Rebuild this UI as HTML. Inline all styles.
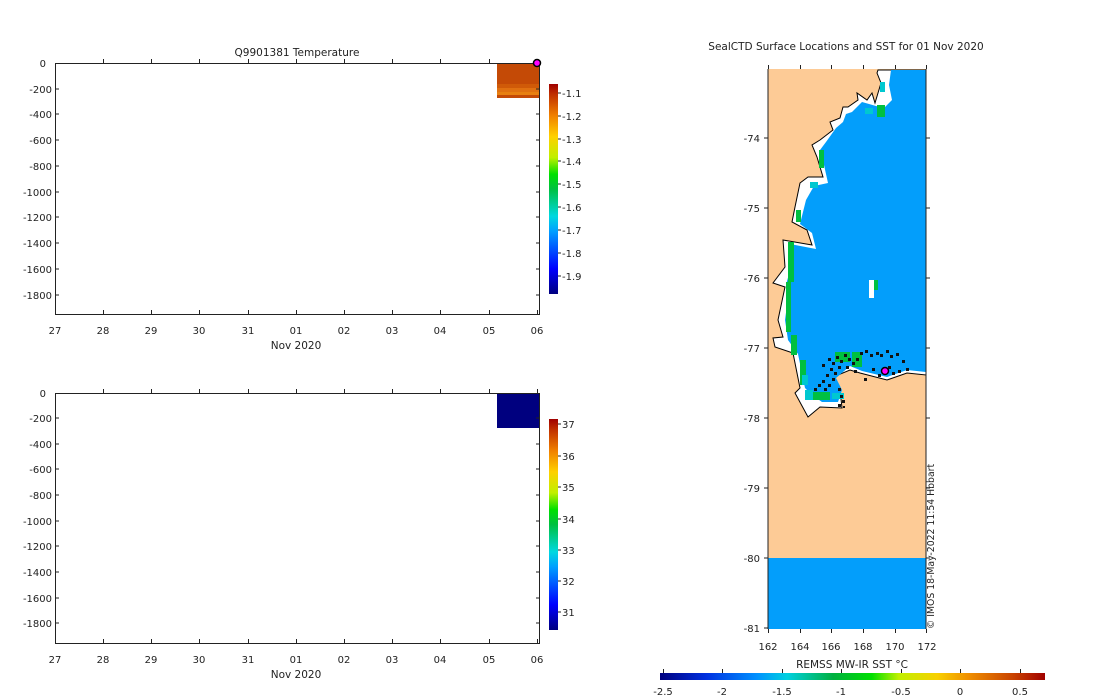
<!DOCTYPE html>
<html><head><meta charset="utf-8"><style>
html,body{margin:0;padding:0;background:#fff;}
svg{display:block;font-family:"DejaVu Sans","Liberation Sans",sans-serif;}
text{fill:#222;font-size:10px;}
</style></head><body>
<svg width="1100" height="700" viewBox="0 0 1100 700" xmlns="http://www.w3.org/2000/svg">
<defs>
<linearGradient id="jetv" x1="0" y1="1" x2="0" y2="0">
<stop offset="0" stop-color="#00007f"/><stop offset="0.12" stop-color="#0000ff"/><stop offset="0.3" stop-color="#00a0ff"/><stop offset="0.37" stop-color="#00d8e0"/><stop offset="0.5" stop-color="#00c040"/><stop offset="0.57" stop-color="#00e000"/><stop offset="0.65" stop-color="#c0f000"/><stop offset="0.75" stop-color="#ffd000"/><stop offset="0.85" stop-color="#f08000"/><stop offset="0.95" stop-color="#c03000"/><stop offset="1" stop-color="#a00000"/>
</linearGradient>
<linearGradient id="jeth" x1="0" y1="0" x2="1" y2="0">
<stop offset="0" stop-color="#00007f"/><stop offset="0.12" stop-color="#0030e0"/><stop offset="0.25" stop-color="#0090ff"/><stop offset="0.33" stop-color="#00d0e0"/><stop offset="0.45" stop-color="#00b040"/><stop offset="0.55" stop-color="#00e000"/><stop offset="0.62" stop-color="#c0f000"/><stop offset="0.72" stop-color="#f8d000"/><stop offset="0.8" stop-color="#f09000"/><stop offset="0.92" stop-color="#c84000"/><stop offset="1" stop-color="#a00000"/>
</linearGradient>
</defs>

<!-- TOP PLOT -->
<text x="297" y="56" text-anchor="middle" style="font-size:10.5px">Q9901381  Temperature</text>
<rect x="497" y="63" width="42" height="35" fill="#c44a06"/>
<rect x="497" y="84" width="42" height="4" fill="#d05a08"/>
<rect x="497" y="88" width="42" height="4" fill="#e07010"/>
<rect x="497" y="92" width="42" height="3" fill="#e88010"/>
<g stroke="#222" stroke-width="1" fill="none">
<path d="M55.5 63.5H539.5V314.5H55.5Z"/>
<path d="M55 89h4M55 114h4M55 140h4M55 166h4M55 192h4M55 217h4M55 243h4M55 269h4M55 295h4"/>
<path d="M536 89h3M536 114h3M536 140h3M536 166h3M536 192h3M536 217h3M536 243h3M536 269h3M536 295h3"/>
<path d="M103.5 63v-4M151.5 63v-4M199.5 63v-4M248.5 63v-4M296.5 63v-4M344.5 63v-4M392.5 63v-4M440.5 63v-4M489.5 63v-4M537.5 63v-4"/>
<path d="M103.5 314v-4M151.5 314v-4M199.5 314v-4M248.5 314v-4M296.5 314v-4M344.5 314v-4M392.5 314v-4M440.5 314v-4M489.5 314v-4M537.5 314v-4"/>
</g>
<circle cx="537" cy="63" r="3.5" fill="#ff00ff" stroke="#000" stroke-width="1.5"/>
<g text-anchor="end">
<text x="46" y="67">0</text><text x="52" y="93">-200</text><text x="52" y="118">-400</text><text x="52" y="144">-600</text><text x="52" y="170">-800</text><text x="52" y="196">-1000</text><text x="52" y="221">-1200</text><text x="52" y="247">-1400</text><text x="52" y="273">-1600</text><text x="52" y="299">-1800</text>
</g>
<g text-anchor="middle">
<text x="55" y="334">27</text><text x="103" y="334">28</text><text x="151" y="334">29</text><text x="199" y="334">30</text><text x="248" y="334">31</text><text x="296" y="334">01</text><text x="344" y="334">02</text><text x="392" y="334">03</text><text x="440" y="334">04</text><text x="489" y="334">05</text><text x="537" y="334">06</text>
<text x="296" y="349" style="font-size:10.5px">Nov 2020</text>
</g>
<rect x="549" y="84" width="9" height="210" fill="url(#jetv)"/>
<g stroke="#222"><path d="M558 93h3M558 116h3M558 139h3M558 161h3M558 184h3M558 207h3M558 230h3M558 253h3M558 276h3"/></g>
<g>
<text x="562" y="97">-1.1</text><text x="562" y="120">-1.2</text><text x="562" y="143">-1.3</text><text x="562" y="165">-1.4</text><text x="562" y="188">-1.5</text><text x="562" y="211">-1.6</text><text x="562" y="234">-1.7</text><text x="562" y="257">-1.8</text><text x="562" y="280">-1.9</text>
</g>

<!-- BOTTOM PLOT -->
<rect x="497" y="393" width="42" height="35" fill="#00007f"/>
<g stroke="#222" stroke-width="1" fill="none">
<path d="M55.5 393.5H539.5V643.5H55.5Z"/>
<path d="M55 418h4M55 444h4M55 469h4M55 495h4M55 521h4M55 546h4M55 572h4M55 598h4M55 623h4"/>
<path d="M536 418h3M536 444h3M536 469h3M536 495h3M536 521h3M536 546h3M536 572h3M536 598h3M536 623h3"/>
<path d="M103.5 393v-4M151.5 393v-4M199.5 393v-4M248.5 393v-4M296.5 393v-4M344.5 393v-4M392.5 393v-4M440.5 393v-4M489.5 393v-4M537.5 393v-4"/>
<path d="M103.5 643v-4M151.5 643v-4M199.5 643v-4M248.5 643v-4M296.5 643v-4M344.5 643v-4M392.5 643v-4M440.5 643v-4M489.5 643v-4M537.5 643v-4"/>
</g>
<g text-anchor="end">
<text x="46" y="397">0</text><text x="52" y="422">-200</text><text x="52" y="448">-400</text><text x="52" y="473">-600</text><text x="52" y="499">-800</text><text x="52" y="525">-1000</text><text x="52" y="550">-1200</text><text x="52" y="576">-1400</text><text x="52" y="602">-1600</text><text x="52" y="627">-1800</text>
</g>
<g text-anchor="middle">
<text x="55" y="663">27</text><text x="103" y="663">28</text><text x="151" y="663">29</text><text x="199" y="663">30</text><text x="248" y="663">31</text><text x="296" y="663">01</text><text x="344" y="663">02</text><text x="392" y="663">03</text><text x="440" y="663">04</text><text x="489" y="663">05</text><text x="537" y="663">06</text>
<text x="296" y="678" style="font-size:10.5px">Nov 2020</text>
</g>
<rect x="549" y="419" width="9" height="211" fill="url(#jetv)"/>
<g stroke="#222"><path d="M558 424h3M558 456h3M558 487h3M558 519h3M558 550h3M558 581h3M558 612h3"/></g>
<g>
<text x="562" y="428">37</text><text x="562" y="460">36</text><text x="562" y="491">35</text><text x="562" y="523">34</text><text x="562" y="554">33</text><text x="562" y="585">32</text><text x="562" y="616">31</text>
</g>

<!-- MAP -->
<text x="846" y="50" text-anchor="middle" style="font-size:10.5px">SealCTD Surface Locations and SST for 01 Nov 2020</text>
<rect x="768" y="69" width="158" height="489" fill="#fdcb96"/>
<rect x="768" y="558" width="158" height="71" fill="#039efb"/>
<path d="M878 70L877 73L881 83L878 93L875 103L872 93L867 100L857 93L858 100L848 107L843 107L840 118L830 122L833 130L820 140L812 145L817 157L823 177L808 177L800 183L795 207L792 222L807 230L812 245L783 240L785 267L773 283L785 287L778 320L783 337L773 338L775 347L793 353L800 388L795 393L808 417L820 407L842 408L840 390L833 377L850 370L860 373L887 380L907 373L926 375L926 70Z" fill="#fff" stroke="#000" stroke-width="1"/>
<path d="M891 70L889 85L892 100L884 108L876 106L862 102L852 112L846 114L843 122L836 128L826 142L820 150L824 165L828 183L814 186L806 200L800 224L812 233L816 249L790 244L790 270L786 285L789 290L785 320L788 340L798 354L805 388L812 395L822 402L838 402L842 390L836 378L850 366L862 371L887 377L907 370L926 372L926 70Z" fill="#039efb"/>
<g fill="#00c040">
<rect x="788" y="242" width="6" height="40"/><rect x="786" y="282" width="5" height="50"/><rect x="791" y="335" width="6" height="20"/>
<rect x="800" y="360" width="6" height="25"/><rect x="819" y="150" width="5" height="18"/>
<rect x="835" y="352" width="15" height="10"/><rect x="812" y="392" width="18" height="8"/><rect x="852" y="352" width="10" height="15"/>
<rect x="877" y="105" width="8" height="12"/><rect x="796" y="210" width="5" height="12"/>
</g>
<g fill="#00c8d0">
<rect x="805" y="390" width="8" height="10"/><rect x="832" y="393" width="12" height="6"/><rect x="802" y="375" width="6" height="10"/>
<rect x="880" y="82" width="5" height="10"/><rect x="865" y="108" width="8" height="6"/><rect x="810" y="182" width="8" height="6"/>
</g>
<rect x="869" y="280" width="5" height="18" fill="#fff"/><rect x="874" y="280" width="4" height="10" fill="#00c040"/>
<g fill="#111">
<rect x="828" y="358" width="3" height="3"/><rect x="832" y="362" width="3" height="3"/><rect x="836" y="356" width="3" height="3"/><rect x="840" y="360" width="3" height="3"/><rect x="830" y="368" width="3" height="3"/><rect x="826" y="374" width="3" height="3"/><rect x="834" y="372" width="3" height="3"/><rect x="822" y="380" width="3" height="3"/><rect x="818" y="384" width="3" height="3"/><rect x="828" y="384" width="3" height="3"/><rect x="832" y="378" width="3" height="3"/><rect x="824" y="388" width="3" height="3"/><rect x="814" y="388" width="3" height="3"/><rect x="838" y="388" width="3" height="3"/><rect x="840" y="395" width="3" height="3"/><rect x="842" y="400" width="3" height="3"/><rect x="838" y="404" width="3" height="3"/><rect x="843" y="406" width="2" height="2"/>
<rect x="844" y="354" width="3" height="3"/><rect x="848" y="358" width="3" height="3"/><rect x="852" y="362" width="3" height="3"/><rect x="856" y="358" width="3" height="3"/><rect x="846" y="366" width="3" height="3"/><rect x="854" y="370" width="3" height="3"/><rect x="860" y="352" width="3" height="3"/><rect x="865" y="350" width="3" height="3"/><rect x="870" y="354" width="3" height="3"/><rect x="876" y="352" width="3" height="3"/><rect x="880" y="354" width="3" height="3"/><rect x="886" y="350" width="3" height="3"/><rect x="890" y="355" width="3" height="3"/><rect x="896" y="353" width="3" height="3"/><rect x="902" y="360" width="3" height="3"/><rect x="872" y="368" width="3" height="3"/><rect x="878" y="374" width="3" height="3"/><rect x="892" y="372" width="3" height="3"/><rect x="898" y="370" width="3" height="3"/><rect x="906" y="368" width="3" height="3"/><rect x="864" y="378" width="3" height="3"/><rect x="888" y="366" width="3" height="3"/><rect x="822" y="364" width="3" height="3"/><rect x="838" y="366" width="3" height="3"/>
</g>
<circle cx="885" cy="371" r="3.5" fill="#ff00ff" stroke="#000" stroke-width="1.5"/>
<g stroke="#222" fill="none">
<path d="M768 69V629M926 69V629"/>
<path d="M764 138h4M764 208h4M764 278h4M764 348h4M764 418h4M764 488h4M764 558h4M764 628h4"/>
<path d="M926 138h4M926 208h4M926 278h4M926 348h4M926 418h4M926 488h4M926 558h4"/>
<path d="M768.5 629v4M800.5 629v4M831.5 629v4M863.5 629v4M895.5 629v4M926.5 629v4"/>
<path d="M768.5 69v-4M800.5 69v-4M831.5 69v-4M863.5 69v-4M895.5 69v-4M926.5 69v-4"/>
</g>
<g text-anchor="end">
<text x="760" y="142">-74</text><text x="760" y="212">-75</text><text x="760" y="282">-76</text><text x="760" y="352">-77</text><text x="760" y="422">-78</text><text x="760" y="492">-79</text><text x="760" y="562">-80</text><text x="760" y="632">-81</text>
</g>
<g text-anchor="middle">
<text x="768" y="650">162</text><text x="800" y="650">164</text><text x="831" y="650">166</text><text x="863" y="650">168</text><text x="895" y="650">170</text><text x="927" y="650">172</text>
<text x="852" y="668" style="font-size:10.5px">REMSS MW-IR SST °C</text>
</g>
<text transform="translate(934,629) rotate(-90)" style="font-size:9.3px">© IMOS 18-May-2022 11:54 Hbbart</text>
<rect x="660" y="673" width="385" height="7" fill="url(#jeth)"/>
<g stroke="#222"><path d="M663.5 669v4M722.5 669v4M782.5 669v4M841.5 669v4M901.5 669v4M960.5 669v4M1020.5 669v4"/></g>
<g text-anchor="middle">
<text x="663" y="695">-2.5</text><text x="722" y="695">-2</text><text x="782" y="695">-1.5</text><text x="841" y="695">-1</text><text x="901" y="695">-0.5</text><text x="960" y="695">0</text><text x="1020" y="695">0.5</text>
</g>
</svg>
</body></html>
